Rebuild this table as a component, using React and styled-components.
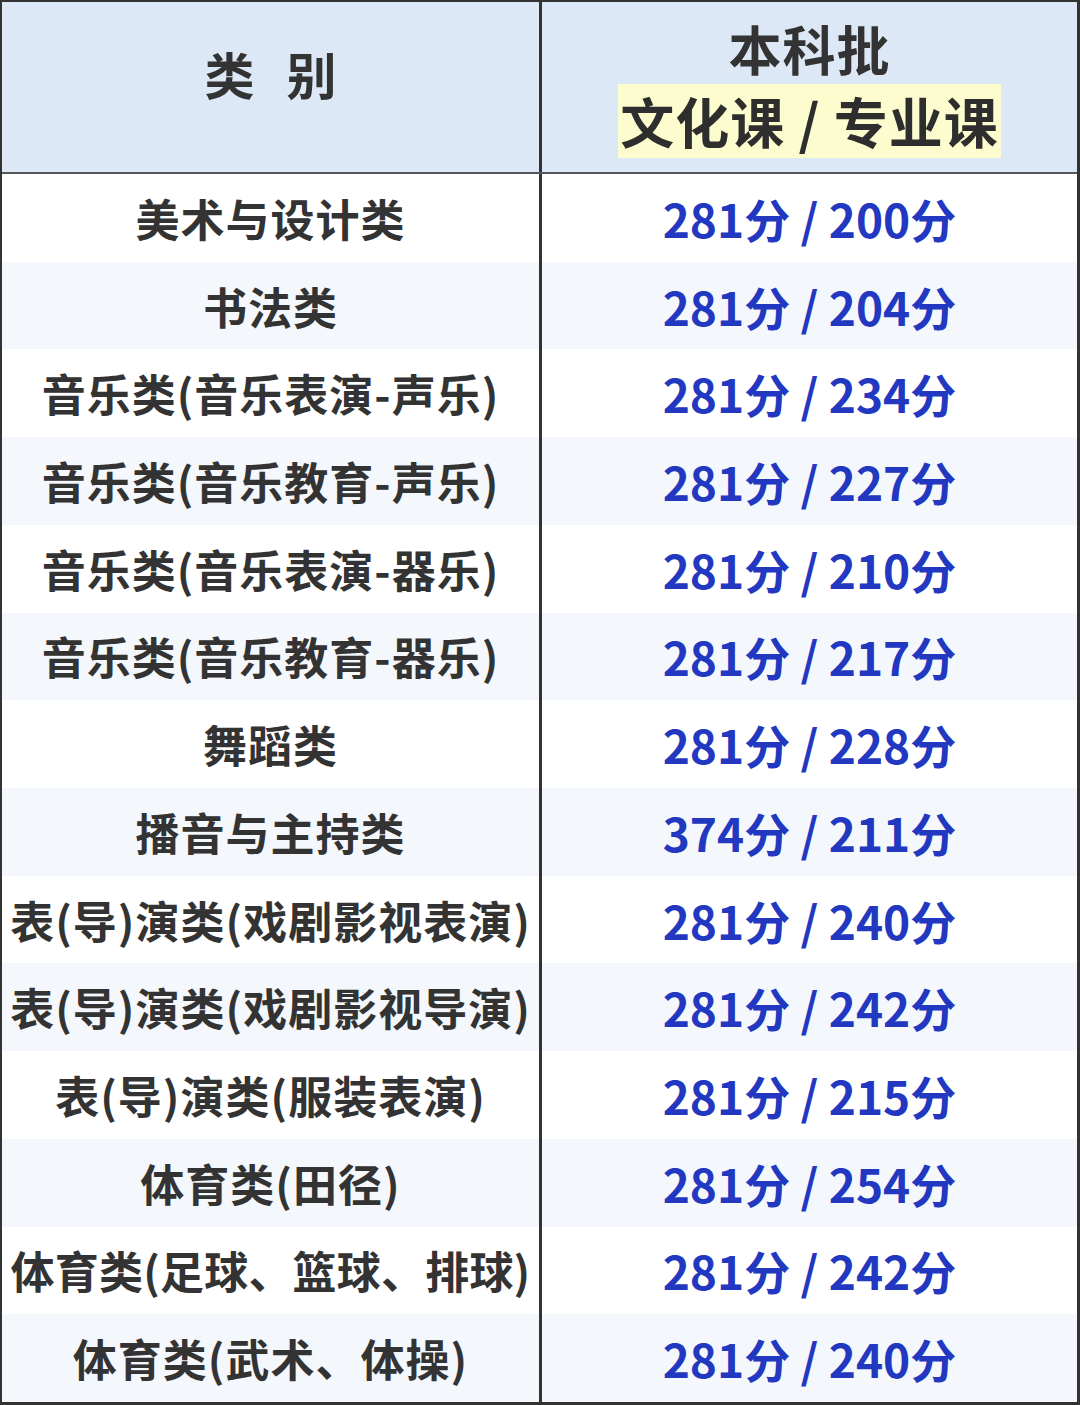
import React from "react";
import styled, { createGlobalStyle } from "styled-components";

const GlobalStyle = createGlobalStyle`
  html, body {
    margin: 0;
    padding: 0;
    background: #ffffff;
  }
  body {
    font-family: "Noto Sans CJK SC", "Noto Sans", sans-serif;
  }
`;

const rows = [
  { name: "美术与设计类", culture: "281", major: "200" },
  { name: "书法类", culture: "281", major: "204" },
  { name: "音乐类(音乐表演-声乐)", culture: "281", major: "234" },
  { name: "音乐类(音乐教育-声乐)", culture: "281", major: "227" },
  { name: "音乐类(音乐表演-器乐)", culture: "281", major: "210" },
  { name: "音乐类(音乐教育-器乐)", culture: "281", major: "217" },
  { name: "舞蹈类", culture: "281", major: "228" },
  { name: "播音与主持类", culture: "374", major: "211" },
  { name: "表(导)演类(戏剧影视表演)", culture: "281", major: "240" },
  { name: "表(导)演类(戏剧影视导演)", culture: "281", major: "242" },
  { name: "表(导)演类(服装表演)", culture: "281", major: "215" },
  { name: "体育类(田径)", culture: "281", major: "254" },
  { name: "体育类(足球、篮球、排球)", culture: "281", major: "242", tight: true },
  { name: "体育类(武术、体操)", culture: "281", major: "240" },
];

function App() {
  return (
    <>
      <GlobalStyle />
      <Table>
        <HeaderRow>
          <HeaderCell $left>
            <CategoryTitle>类别</CategoryTitle>
          </HeaderCell>
          <HeaderCell>
            <HeaderTitle>本科批</HeaderTitle>
            <Highlight>文化课 / 专业课</Highlight>
          </HeaderCell>
        </HeaderRow>
        {rows.map((row, i) => (
          <Row key={row.name} $shaded={i % 2 === 1}>
            <NameCell $tight={row.tight}>{row.name}</NameCell>
            <ScoreCell>
              {row.culture}分 / {row.major}分
            </ScoreCell>
          </Row>
        ))}
      </Table>
    </>
  );
}

const Table = styled.div`
  width: 1080px;
  height: 1405px;
  box-sizing: border-box;
  display: flex;
  flex-direction: column;
  border: 2px solid #333333;
  border-right-width: 3px;
  border-bottom-width: 3px;
  overflow: hidden;
`;

const HeaderRow = styled.div`
  height: 170px;
  flex: none;
  display: grid;
  grid-template-columns: 540px 1fr;
  background: #dce8f6;
  border-bottom: 2px solid #55595e;
`;

const HeaderCell = styled.div`
  display: flex;
  flex-direction: column;
  align-items: center;
  justify-content: center;
  gap: 6px;
  border-right: ${(p) => (p.$left ? "3px solid #333333" : "none")};
  padding-bottom: ${(p) => (p.$left ? "28px" : "0")};
  padding-top: ${(p) => (p.$left ? "0" : "2px")};
`;

const HeaderTitle = styled.div`
  font-size: 53px;
  font-weight: 700;
  color: #333333;
  line-height: 60px;
  letter-spacing: 1px;
`;

const CategoryTitle = styled(HeaderTitle)`
  font-size: 50px;
  letter-spacing: 32px;
  margin-right: -32px;
`;

const Highlight = styled.div`
  background: #fdfccf;
  padding: 4px 2px;
  font-size: 54px;
  font-weight: 700;
  color: #2e2e2e;
  line-height: 66px;
  letter-spacing: 1px;
`;

const Row = styled.div`
  flex: 1;
  display: grid;
  grid-template-columns: 540px 1fr;
  background: ${(p) => (p.$shaded ? "#f4f7fb" : "#ffffff")};
`;

const NameCell = styled.div`
  display: flex;
  align-items: center;
  justify-content: center;
  border-right: 3px solid #333333;
  font-size: 44px;
  font-weight: 700;
  color: #333333;
  white-space: nowrap;
  letter-spacing: ${(p) => (p.$tight ? "0.2px" : "1px")};
`;

const ScoreCell = styled.div`
  display: flex;
  align-items: center;
  justify-content: center;
  font-size: 46px;
  font-weight: 700;
  color: #2338c0;
  white-space: pre;
`;

export default App;
